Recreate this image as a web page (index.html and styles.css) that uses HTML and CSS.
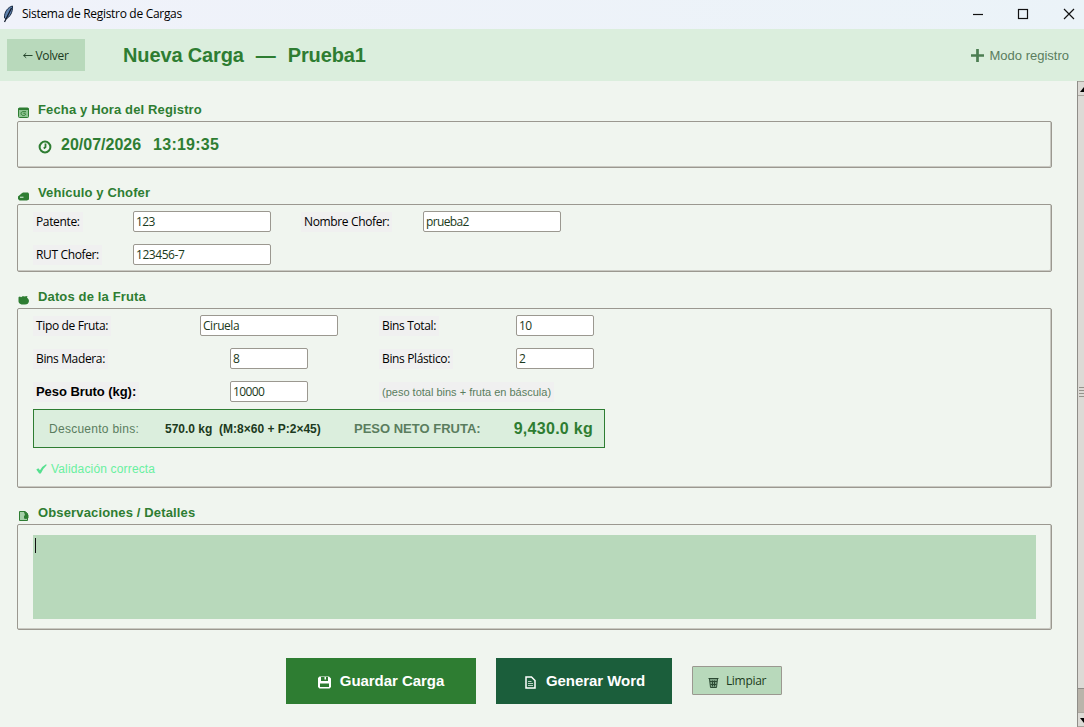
FILE: index.html
```html
<!DOCTYPE html>
<html lang="es">
<head>
    <meta charset="UTF-8">
    <meta name="viewport" content="width=device-width, initial-scale=1.0">
    <title>Sistema de Registro de Cargas</title>
    <link rel="stylesheet" href="styles.css">
</head>
<body>
    <div class="titlebar">
        <svg class="feather" viewBox="0 0 12 18">
            <path d="M10.500 1C6 2 2 7 2.500 13L4 14C8 12 11 7 10.500 1Z" fill="#5f83b0" stroke="#1c2c44" stroke-width="1"/>
            <path d="M9.500 3L2.500 17" stroke="#111a2a" stroke-width="1.300"/>
        </svg>
        <span class="app-title">Sistema de Registro de Cargas</span>
        <div class="window-controls">
            <svg viewBox="0 0 12 12"><path d="M1 6.500H11"/></svg>
            <svg viewBox="0 0 12 12"><rect x="1.500" y="1.500" width="9" height="9"/></svg>
            <svg viewBox="0 0 12 12"><path d="M1 1L11 11M11 1L1 11"/></svg>
        </div>
    </div>

    <header class="header">
        <button class="btn-back">
            <svg viewBox="0 0 11 7"><path d="M0.500 3.500H10.500M3.500 1L0.800 3.500L3.500 6"/></svg>
            <span>Volver</span>
        </button>
        <h1><span>Nueva Carga</span><span>—</span><span>Prueba1</span></h1>
        <div class="mode">
            <svg viewBox="0 0 12 12"><path d="M6 0V12M0 6H12"/></svg>
            <span>Modo registro</span>
        </div>
    </header>

    <div class="viewport">
        <main class="content">
            <section>
                <h2>
                    <svg viewBox="0 0 11 11">
                        <rect x="0.500" y="1" width="10" height="9.500" rx="1" fill="#8fc493" stroke="#2e7d32"/>
                        <path d="M0.500 2H10.500" stroke="#2e7d32" stroke-width="2"/>
                        <path d="M8 4.700H4.500C2 5.500 3 8.500 5.500 8.500C8 8.500 8.500 6 5.500 6.500" fill="none" stroke="#2e7d32"/>
                    </svg>
                    <span>Fecha y Hora del Registro</span>
                </h2>
                <div class="box box-date">
                    <svg viewBox="0 0 14 14">
                        <circle cx="7" cy="7" r="5.400" fill="none" stroke="#2e7d32" stroke-width="2"/>
                        <path d="M7.500 3.500V7L5.800 8.500" fill="none" stroke="#2e7d32" stroke-width="1.800"/>
                    </svg>
                    <span class="date">20/07/2026</span>
                    <span class="time">13:19:35</span>
                </div>
            </section>

            <section>
                <h2>
                    <svg viewBox="0 0 11 11">
                        <path d="M0 6.500L3.500 3.500L5 2.500H10L11 3.500V9.500L9 10.500H1.500L0 9Z" fill="#2e7d32"/>
                        <path d="M2 7.300H5.500" stroke="#b8d9ba" stroke-width="1.300"/>
                    </svg>
                    <span>Vehículo y Chofer</span>
                </h2>
                <div class="box">
                    <div class="fields fields-driver">
                        <label for="patente">Patente:</label>
                        <input id="patente" type="text" value="123">
                        <label for="chofer">Nombre Chofer:</label>
                        <input id="chofer" type="text" value="prueba2">
                        <label for="rut">RUT Chofer:</label>
                        <input id="rut" type="text" value="123456-7">
                    </div>
                </div>
            </section>

            <section>
                <h2>
                    <svg viewBox="0 0 11 11">
                        <path d="M0.500 4Q0 2.500 2 2.500L3 3.200L5 2L6 2.500L9.500 2L9 3.500Q11 5 11 7Q10.500 10.500 7 10.500H3.500Q0 9.500 0.500 6Z" fill="#2e7d32"/>
                    </svg>
                    <span>Datos de la Fruta</span>
                </h2>
                <div class="box box-fruit">
                    <div class="fields fields-fruit">
                        <label for="tipo">Tipo de Fruta:</label>
                        <input id="tipo" type="text" value="Ciruela">
                        <label for="total">Bins Total:</label>
                        <input id="total" class="short" type="text" value="10">
                        <label for="madera">Bins Madera:</label>
                        <input id="madera" class="short centered" type="text" value="8">
                        <label for="plastico">Bins Plástico:</label>
                        <input id="plastico" class="short" type="text" value="2">
                        <label class="strong" for="bruto">Peso Bruto (kg):</label>
                        <input id="bruto" class="short centered" type="text" value="10000">
                        <span class="hint">(peso total bins + fruta en báscula)</span>
                    </div>
                    <div class="summary">
                        <span class="summary-label">Descuento bins:</span>
                        <span class="summary-discount">570.0 kg&nbsp; (M:8×60 + P:2×45)</span>
                        <span class="summary-net-label">PESO NETO FRUTA:</span>
                        <span class="summary-net">9,430.0 kg</span>
                    </div>
                    <div class="validation">
                        <svg viewBox="0 0 11 10"><path d="M0.300 5.500L2.300 4.300L4 6.300Q6.500 2 10 0.300L10.800 1Q7 4.500 4.800 9.500H3.200Z" fill="#55e08f"/></svg>
                        <span>Validación correcta</span>
                    </div>
                </div>
            </section>

            <section>
                <h2>
                    <svg viewBox="0 0 11 11">
                        <path d="M1.500 1.500H7L9.500 3.500V10.500H1.500Z" fill="#a5cfa8" stroke="#2e7d32"/>
                        <path d="M6 2H7.500L10.500 5V8L8 9L6 8.500V6L7 5Z" fill="#2e7d32"/>
                    </svg>
                    <span>Observaciones / Detalles</span>
                </h2>
                <div class="box box-notes">
                    <div class="notes" role="textbox" aria-label="Observaciones"><span class="caret"></span></div>
                </div>
            </section>

            <div class="actions">
                <button class="btn btn-save">
                    <svg viewBox="0 0 13 13">
                        <path fill-rule="evenodd" d="M1.500 0.500H11L13 2.500V11L11.500 12.500H1.500L0 11V2ZM3 1V5H10V1H8V3.500H6.500V1ZM2 7.500V11H11V7.500Z" fill="#fff"/>
                    </svg>
                    <span>Guardar Carga</span>
                </button>
                <button class="btn btn-word">
                    <svg viewBox="0 0 13 13">
                        <path d="M2 1H7.500L11 4.500V12H2Z" fill="none" stroke="#fff" stroke-width="1.500"/>
                        <path d="M4 5.500H7.500M4 7.500H9M4 9.500H9" stroke="#b7cdc1" stroke-width="1"/>
                    </svg>
                    <span>Generar Word</span>
                </button>
                <button class="btn-clear">
                    <svg viewBox="0 0 11 11">
                        <path d="M1.500 2L2.500 10.500H8.500L9.500 2Z" fill="#7fa386"/>
                        <path d="M0.500 1.500H10.500M1.500 2L2.500 10.500H8.500L9.500 2M4.500 3.500V9.500M6.500 3.500V9.500M2 4.500H9M2.500 7.500H8.500" fill="none" stroke="#2c4a33" stroke-width="1"/>
                    </svg>
                    <span>Limpiar</span>
                </button>
            </div>
        </main>

        <div class="scrollbar">
            <div class="arrow"><svg viewBox="0 0 8 5"><path d="M0 5L4 0L8 5Z"/></svg></div>
            <div class="thumb"><i></i><i></i><i></i><i></i></div>
            <div class="trough"></div>
            <div class="arrow"><svg viewBox="0 0 8 5"><path d="M0 0H8L4 5Z"/></svg></div>
        </div>
    </div>
</body>
</html>
```
FILE: styles.css
```css
:root {
    --bg: #f0f5ef;
    --header-bg: #dbeedd;
    --soft-green: #b8d9bb;
    --green: #2e7d32;
    --dark-green: #1b5e3b;
    --muted: #5a7d5e;
    --border: #9b9890;
}

* {
    margin: 0;
    padding: 0;
    box-sizing: border-box;
}

body {
    width: 1084px;
    height: 727px;
    overflow: hidden;
    display: flex;
    flex-direction: column;
    background-color: var(--bg);
    font-family: "Open Sans", "Noto Sans", sans-serif;
    font-size: 12px;
    color: #000;
}

svg {
    display: block;
    flex: none;
}

span, label {
    white-space: nowrap;
}

button {
    border: none;
    font-family: inherit;
    display: flex;
    align-items: center;
}

/* Window title bar */
.titlebar {
    height: 29px;
    display: flex;
    align-items: center;
    padding: 0 9px 2px 2px;
    background: linear-gradient(90deg, #f0f2fa, #ebf3f8);
}

.feather {
    width: 12px;
    height: 18px;
    margin-right: 8px;
}

.app-title {
    letter-spacing: -0.3px;
}

.window-controls {
    display: flex;
    gap: 33px;
    margin-left: auto;
}

.window-controls svg {
    width: 12px;
    height: 12px;
    fill: none;
    stroke: #111;
    stroke-width: 1.2;
}

.window-controls svg:last-child {
    margin-left: 1px;
}

/* Header */
.header {
    height: 52px;
    display: flex;
    align-items: center;
    padding: 0 15px 0 7px;
    background-color: var(--header-bg);
}

.btn-back {
    width: 78px;
    height: 32px;
    justify-content: center;
    gap: 3px;
    padding-right: 1px;
    background-color: var(--soft-green);
    color: #1b3a20;
    font-size: 12px;
    letter-spacing: -0.35px;
}

.btn-back svg {
    width: 10px;
    height: 7px;
    fill: none;
    stroke: #1b3a20;
}

h1 {
    display: flex;
    gap: 12px;
    margin-left: 38px;
    font-family: "Liberation Sans", Arial, sans-serif;
    font-size: 20px;
    letter-spacing: -0.13px;
    color: var(--green);
}

.mode {
    display: flex;
    align-items: center;
    gap: 6px;
    margin-left: auto;
    font-family: "Liberation Sans", Arial, sans-serif;
    font-size: 13px;
    color: var(--muted);
}

.mode svg {
    width: 13px;
    height: 13px;
    stroke: #4c7e52;
    stroke-width: 2.5;
}

/* Scrollable form */
.viewport {
    flex: 1;
    display: flex;
    min-height: 0;
}

.content {
    width: 1077px;
    padding: 4px 25px 0 17px;
}

h2 {
    display: flex;
    align-items: center;
    gap: 9px;
    height: 36px;
    padding: 13px 0 0 1px;
    font-family: "Liberation Sans", Arial, sans-serif;
    font-size: 13px;
    letter-spacing: 0.14px;
    color: var(--green);
}

h2 svg {
    width: 11px;
    height: 11px;
    margin-top: 5px;
}

.box {
    border: 1px solid var(--border);
    border-radius: 2px;
    padding: 6px 15px;
    box-shadow: inset -1px -1px 0 #c9c9c2;
}

.box-date {
    height: 47px;
    display: flex;
    align-items: center;
    padding-left: 20px;
    font-family: "Liberation Sans", Arial, sans-serif;
    font-size: 16px;
    font-weight: bold;
    color: var(--green);
}

.box-date svg {
    width: 14px;
    height: 14px;
    margin: 4px 9px 0 0;
}

.time {
    margin-left: 12px;
    letter-spacing: 0.25px;
}

.fields {
    display: grid;
    grid-auto-rows: 21px;
    row-gap: 12px;
    align-items: center;
}

.fields-driver {
    grid-template-columns: 100px 168px 122px 138px;
}

.fields-fruit {
    grid-template-columns: 167px 179px 137px 138px;
}

label, .hint {
    justify-self: start;
    padding: 0 3px;
    line-height: 20px;
    background-color: #f0f0f0;
    letter-spacing: -0.36px;
}

.strong {
    font-family: "Liberation Sans", Arial, sans-serif;
    font-size: 13px;
    font-weight: bold;
    letter-spacing: -0.06px;
}

.hint {
    font-family: "Liberation Sans", Arial, sans-serif;
    font-size: 11px;
    letter-spacing: 0;
    color: var(--muted);
}

input {
    width: 138px;
    height: 21px;
    padding: 0 2px;
    border: 1px solid var(--border);
    border-radius: 2px;
    background-color: #fff;
    font-family: inherit;
    font-size: 12px;
    letter-spacing: -0.6px;
    color: #1b3a20;
}

#chofer {
    letter-spacing: -0.65px;
}

#rut, #tipo {
    letter-spacing: -0.45px;
}

.short {
    width: 78px;
}

.centered {
    margin-left: 30px;
}

.box-fruit {
    height: 180px;
}

.summary {
    width: 572px;
    height: 39px;
    display: flex;
    align-items: center;
    margin-top: 7px;
    padding: 0 11px 0 15px;
    border: 1px solid var(--green);
    background-color: var(--header-bg);
    font-family: "Liberation Sans", Arial, sans-serif;
    font-size: 12px;
}

.summary-label {
    width: 116px;
    letter-spacing: 0.27px;
    color: var(--muted);
}

.summary-discount {
    width: 189px;
    font-weight: bold;
    color: #1b3a20;
}

.summary-net-label {
    font-size: 13px;
    font-weight: bold;
    color: var(--muted);
}

.summary-net {
    margin-left: auto;
    font-size: 16px;
    font-weight: bold;
    letter-spacing: 0.28px;
    color: var(--green);
}

.validation {
    display: flex;
    align-items: center;
    gap: 4px;
    height: 20px;
    margin: 11px 0 0 3px;
    font-family: "Liberation Sans", Arial, sans-serif;
    letter-spacing: 0.16px;
    color: #69f0a0;
}

.validation svg {
    width: 11px;
    height: 10px;
}

.box-notes {
    height: 106px;
    padding: 10px 15px;
}

.notes {
    height: 84px;
    padding: 3px 2px;
    background-color: var(--soft-green);
}

.caret {
    display: block;
    width: 1px;
    height: 15px;
    background-color: #111;
}

/* Action buttons */
.actions {
    display: flex;
    justify-content: center;
    align-items: center;
    gap: 20px;
    margin-top: 28px;
    padding-right: 2px;
}

.btn {
    height: 46px;
    justify-content: center;
    gap: 9px;
    padding: 0 0 2px 1px;
    font-family: "Liberation Sans", Arial, sans-serif;
    font-size: 15px;
    font-weight: bold;
    letter-spacing: -0.05px;
    color: #fff;
}

.btn svg {
    width: 13px;
    height: 13px;
    margin-top: 5px;
}

.btn-save {
    width: 190px;
    background-color: var(--green);
}

.btn-word {
    width: 176px;
    padding-left: 2px;
    background-color: var(--dark-green);
}

.btn-clear {
    width: 90px;
    height: 29px;
    justify-content: center;
    gap: 7px;
    margin-bottom: 1px;
    padding-left: 1px;
    border: 1px solid var(--border);
    border-radius: 1px;
    background-color: var(--soft-green);
    font-size: 12px;
    letter-spacing: -0.3px;
    color: #1b3a20;
}

.btn-clear svg {
    width: 11px;
    height: 11px;
    margin-top: 4px;
}

/* Scrollbar, cut off by the window edge */
.scrollbar {
    width: 7px;
    flex: none;
    display: flex;
    flex-direction: column;
    overflow: hidden;
    border-left: 1px solid #8f8d88;
    background-color: #dcdad5;
}

.arrow {
    height: 15px;
    flex: none;
    padding: 5px 0 0 2px;
    border-top: 1px solid #aaa79f;
    border-bottom: 1px solid #aaa79f;
}

.arrow svg {
    width: 8px;
    height: 5px;
}

.thumb {
    flex: 1;
    display: flex;
    flex-direction: column;
    justify-content: center;
    gap: 2px;
}

.thumb i {
    height: 1px;
    margin-left: 1px;
    background-color: #96938c;
}

.trough {
    height: 24px;
    border-top: 1px solid #8f8d88;
    background-color: #b9b4aa;
}
```
